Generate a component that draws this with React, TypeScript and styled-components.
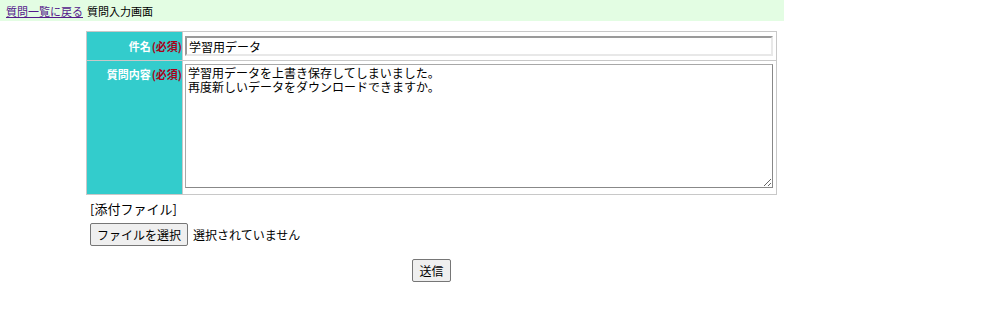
import React from "react";
import styled, { createGlobalStyle } from "styled-components";

const Global = createGlobalStyle`
  html, body { margin: 0; padding: 0; background: #fff; }
  body { font-family: "Noto Sans CJK JP", "Noto Sans", sans-serif; color: #000; }
`;

const HeaderBar = styled.div`
  width: 784px;
  height: 21px;
  background: #e3fde3;
  display: flex;
  align-items: center;
  gap: 4px;
  padding-left: 6px;
  box-sizing: border-box;
  font-size: 11px;
  white-space: nowrap;
`;

const BackLink = styled.a`
  color: #551a8b;
  text-decoration: underline;
`;

const Main = styled.div`
  margin: 10px 0 0 86px;
  width: 691px;
  display: flex;
  flex-direction: column;
`;

const FormTable = styled.table`
  width: 691px;
  border-collapse: collapse;
  border: 1px solid #d6d6d6;
`;

const LabelCell = styled.th<{ $top?: boolean }>`
  width: 96px;
  background: #33cccc;
  color: #fff;
  font-size: 11px;
  font-weight: bold;
  text-align: right;
  vertical-align: ${(p) => (p.$top ? "top" : "middle")};
  padding: ${(p) => (p.$top ? "5px 0 0 0" : "0")};
  border: 1px solid #c8c8c8;
  white-space: nowrap;
  box-sizing: border-box;
`;

const Required = styled.span`
  color: #a80018;
  margin-left: 1px;
`;

const FieldCell = styled.td<{ $area?: boolean }>`
  padding: ${(p) => (p.$area ? "3px 3px 6px 2px" : "3px 3px 3px 2px")};
  border: 1px solid #c8c8c8;
  background: #fff;
`;

const TextInput = styled.input`
  display: block;
  width: 100%;
  height: 20px;
  box-sizing: border-box;
  font-family: "Noto Sans CJK JP", sans-serif;
  font-size: 12px;
  padding: 0 2px;
  border-style: solid;
  border-width: 2px;
  border-color: #9a9a9a #e8e8e8 #e8e8e8 #9a9a9a;
  margin: 1px 0;
  outline: none;
`;

const TextArea = styled.textarea`
  display: block;
  width: 588px;
  height: 124px;
  box-sizing: border-box;
  font-family: "Noto Sans CJK JP", sans-serif;
  font-size: 12px;
  line-height: 14px;
  padding: 1px 2px;
  border-style: solid;
  border-width: 1px;
  border-color: #a8a8a8 #888 #888 #a8a8a8;
  margin: 0;
  resize: both;
`;

const AttachTitle = styled.div`
  font-size: 13px;
  margin: 5px 0 0 4px;
  line-height: 18px;
`;

const FileRow = styled.div`
  display: flex;
  align-items: center;
  gap: 5px;
  margin: 5px 0 0 4px;
  font-size: 12px;
`;

const Button = styled.button`
  font-family: "Noto Sans CJK JP", sans-serif;
  font-size: 12px;
  height: 23px;
  padding: 0 6px;
  background: #efefef;
  border: 1px solid #767676;
  border-radius: 2px;
  color: #000;
  line-height: 1;
`;

const SubmitRow = styled.div`
  display: flex;
  justify-content: center;
  margin-top: 13px;
`;

export default function App() {
  return (
    <>
      <Global />
      <HeaderBar>
        <BackLink href="#">質問一覧に戻る</BackLink>
        <span>質問入力画面</span>
      </HeaderBar>
      <Main>
        <FormTable>
          <tbody>
            <tr>
              <LabelCell>
                件名<Required>(必須)</Required>
              </LabelCell>
              <FieldCell>
                <TextInput defaultValue="学習用データ" />
              </FieldCell>
            </tr>
            <tr>
              <LabelCell $top>
                質問内容<Required>(必須)</Required>
              </LabelCell>
              <FieldCell $area>
                <TextArea
                  defaultValue={"学習用データを上書き保存してしまいました。\n再度新しいデータをダウンロードできますか。"}
                />
              </FieldCell>
            </tr>
          </tbody>
        </FormTable>
        <AttachTitle>[添付ファイル]</AttachTitle>
        <FileRow>
          <Button type="button">ファイルを選択</Button>
          <span>選択されていません</span>
        </FileRow>
        <SubmitRow>
          <Button type="button">送信</Button>
        </SubmitRow>
      </Main>
    </>
  );
}
